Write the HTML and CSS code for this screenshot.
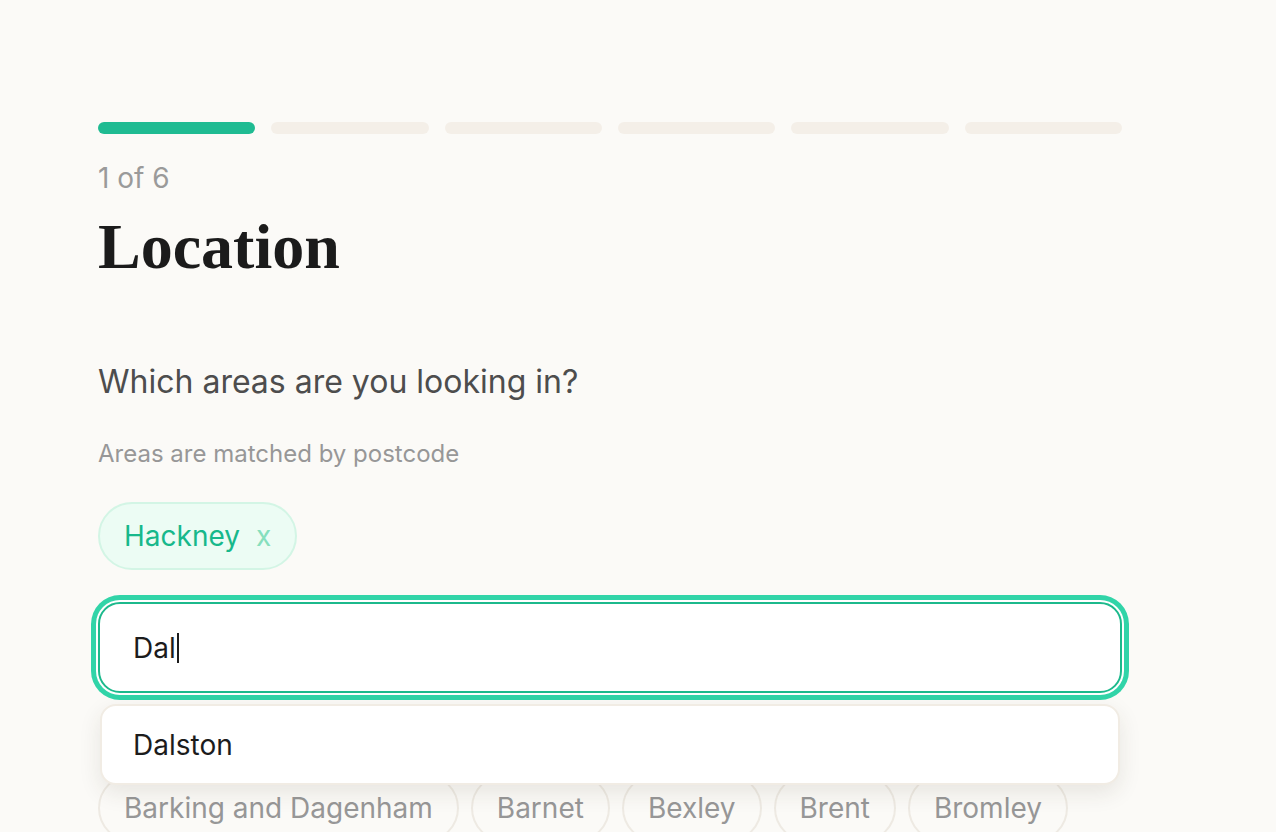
FILE: index.html
```html
<!DOCTYPE html>
<html lang="en">
<head>
<meta charset="utf-8">
<title>Location</title>
<link rel="stylesheet" href="styles.css">
</head>
<body>
<main class="page">
  <div class="progress">
    <span class="seg active"></span>
    <span class="seg"></span>
    <span class="seg"></span>
    <span class="seg"></span>
    <span class="seg"></span>
    <span class="seg"></span>
  </div>
  <p class="step">1 of 6</p>
  <h1 class="title">Location</h1>

  <p class="question">Which areas are you looking in?</p>
  <p class="hint">Areas are matched by postcode</p>

  <div class="selected">
    <span class="chip chip-on">Hackney <span class="chip-x">x</span></span>
  </div>

  <div class="search">
    <div class="input"><span class="typed">Dal</span><span class="caret"></span></div>
    <ul class="dropdown">
      <li class="option">Dalston</li>
    </ul>
  </div>

  <div class="options">
    <span class="chip">Barking and Dagenham</span>
    <span class="chip">Barnet</span>
    <span class="chip">Bexley</span>
    <span class="chip">Brent</span>
    <span class="chip">Bromley</span>
  </div>
</main>
</body>
</html>
```

FILE: styles.css
```css
html, body {
  margin: 0;
  padding: 0;
  background: #fbfaf7;
  height: 100%;
  overflow: hidden;
}

body {
  font-family: Inter, "Noto Sans", "Liberation Sans", sans-serif;
  color: #1a1a1a;
}

.page {
  width: 1024px;
  padding: 122px 0 0 98px;
}

.progress {
  display: flex;
  gap: 16px;
}

.seg {
  flex: 1;
  height: 12px;
  border-radius: 6px;
  background: #f4efe8;
}

.seg.active {
  background: #1fbb92;
}

.step {
  margin: 27px 0 0;
  font-size: 28px;
  line-height: 34px;
  color: #9a9a9a;
}

.title {
  margin: 16px 0 0;
  font-family: "Liberation Serif", "Times New Roman", serif;
  font-weight: 700;
  font-size: 64px;
  line-height: 72px;
  color: #1b1b1b;
}

.question {
  margin: 80px 0 0;
  font-size: 32px;
  line-height: 38px;
  color: #4d4d4d;
}

.hint {
  margin: 38px 0 0;
  font-size: 24px;
  line-height: 30px;
  color: #979797;
}

.selected {
  margin-top: 33px;
  display: flex;
}

.chip {
  display: inline-flex;
  align-items: center;
  box-sizing: border-box;
  height: 68px;
  padding: 0 24px;
  border: 2px solid #eeeae3;
  border-radius: 34px;
  font-size: 28px;
  line-height: 34px;
  color: #979797;
  white-space: nowrap;
}

.chip-on {
  background: #ecfcf4;
  border-color: #d3f5e5;
  color: #17b88b;
}

.chip-x {
  margin-left: 16px;
  color: #86dfbd;
}

.search {
  position: relative;
  margin-top: 32px;
}

.input {
  box-sizing: border-box;
  height: 91px;
  display: flex;
  align-items: center;
  padding: 0 33px;
  background: #fff;
  border: 2px solid #1cb98c;
  border-radius: 22px;
  box-shadow: 0 0 0 2px #fff, 0 0 0 7px #31d4a8;
  font-size: 28px;
  color: #1c1c1c;
}

.caret {
  display: inline-block;
  width: 2px;
  height: 30px;
  margin-left: 1px;
  background: #1c1c1c;
}

.dropdown {
  position: absolute;
  z-index: 2;
  left: 2px;
  right: 2px;
  top: calc(100% + 11px);
  margin: 0;
  padding: 0;
  list-style: none;
  background: #fff;
  border: 2px solid #f1ece4;
  border-radius: 16px;
  box-shadow: 0 8px 22px rgba(60, 50, 30, 0.10);
}

.option {
  height: 77px;
  display: flex;
  align-items: center;
  padding: 0 31px;
  font-size: 28px;
  color: #1c1c1c;
}

.options {
  margin-top: 81px;
  display: flex;
  flex-wrap: wrap;
  gap: 12px;
}
```
